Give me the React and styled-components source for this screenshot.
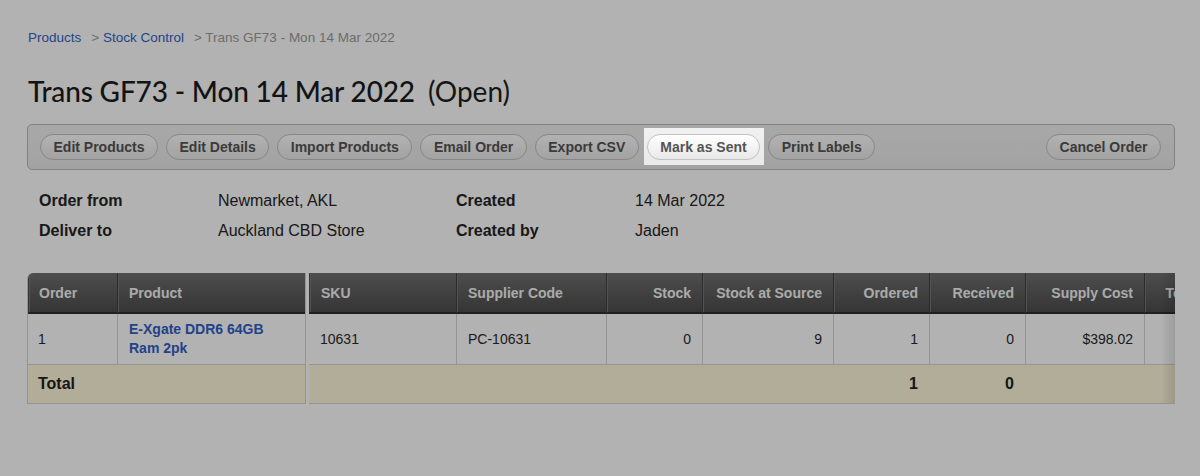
import React from 'react';
import styled, { createGlobalStyle } from 'styled-components';

const GlobalStyle = createGlobalStyle`
  html, body {
    margin: 0;
    padding: 0;
    height: 100%;
    background: #ffffff;
  }
  body {
    font-family: "Liberation Sans", Arial, sans-serif;
    color: #262626;
  }
  * {
    box-sizing: border-box;
  }
`;

const Page = styled.div`
  min-height: 100vh;
  padding: 29px 25px 0 27px;
`;

const Crumbs = styled.div`
  display: flex;
  align-items: center;
  gap: 10px;
  font-size: 13.5px;
  line-height: 18px;
  padding-left: 1px;
  color: #9c9c9c;
`;

const Crumb = styled.a`
  color: #3363c4;
  text-decoration: none;
  white-space: pre;
`;

const Title = styled.h1`
  margin: 27px 0 0 1px;
  font-family: Lato, "Liberation Sans", sans-serif;
  font-size: 28px;
  line-height: 34px;
  font-weight: 500;
  color: #1c1c1c;
  letter-spacing: -0.15px;
`;

const Status = styled.span`
  margin-left: 13px;
  font-size: 28px;
  font-weight: 400;
  color: #1f1f1f;
  letter-spacing: 0;
`;

const Toolbar = styled.div`
  margin-top: 16px;
  display: flex;
  align-items: center;
  gap: 8px;
  height: 46px;
  padding: 0 13px 0 12px;
  border: 1px solid #b9b9b9;
  border-radius: 5px;
  background: linear-gradient(#f1f1f1, #e9e9e9);
`;

const Button = styled.button`
  height: 26px;
  padding: 0 12.5px;
  border: 1px solid #c2c2c2;
  border-radius: 13px;
  background: linear-gradient(#ffffff, #e9e9e9);
  font-family: "Liberation Sans", Arial, sans-serif;
  font-size: 14px;
  font-weight: bold;
  color: #555555;
  white-space: nowrap;
  cursor: pointer;
  margin-left: ${p => (p.$push ? 'auto' : '0')};
`;

const Spotlight = styled.span`
  position: relative;
  z-index: 10;
  display: inline-flex;
  padding: 6px 4px 5px 3px;
  margin: -6px -4px -5px -3px;
  box-shadow: 0 0 0 3000px rgba(0, 0, 0, 0.3);
`;

const Details = styled.div`
  margin-top: 16px;
  padding-left: 12px;
  display: grid;
  grid-template-columns: 179px 238px 179px 1fr;
  grid-auto-rows: 30px;
  align-items: center;
  font-size: 16px;
`;

const Label = styled.div`
  font-weight: bold;
  color: #242424;
`;

const Value = styled.div`
  color: #262626;
`;

const Tables = styled.div`
  margin-top: 27px;
  display: flex;
  gap: 3px;
  align-items: flex-start;
`;

const Frozen = styled.table`
  width: 279px;
  flex: none;
  table-layout: fixed;
  border-collapse: separate;
  border-spacing: 0;
  border-left: 1px solid #d4d4d4;
  border-right: 1px solid #d4d4d4;
  border-bottom: 1px solid #d4d4d4;
  border-top-left-radius: 6px;
  overflow: hidden;
`;

const ScrollArea = styled.div`
  position: relative;
  flex: 1;
  overflow: hidden;
  border-bottom: 1px solid #d4d4d4;
`;

const EdgeShade = styled.div`
  position: absolute;
  top: 0;
  right: 0;
  bottom: 0;
  width: 14px;
  z-index: 1;
  background: linear-gradient(to right, rgba(0, 0, 0, 0), rgba(0, 0, 0, 0.12));
  pointer-events: none;
`;

const Grid = styled.table`
  width: 935px;
  table-layout: fixed;
  border-collapse: separate;
  border-spacing: 0;
`;

const Th = styled.th`
  height: 41px;
  padding: 0 11px 0 ${p => (p.$tight ? '10px' : '11px')};
  text-align: ${p => (p.$num ? 'right' : 'left')};
  font-size: 14px;
  font-weight: bold;
  color: #f4f4f4;
  background: linear-gradient(#6f6f6f, #4d4d4d);
  border-bottom: 2px solid #2e2e2e;
  border-left: 1px solid ${p => (p.$first ? '#4a4a4a' : '#3f3f3f')};
  box-shadow: inset 1px 0 0 #777777;
  white-space: nowrap;
  overflow: hidden;
`;

const Td = styled.td`
  height: 51px;
  padding: 0 11px 0 ${p => (p.$tight ? '10px' : '11px')};
  text-align: ${p => (p.$num ? 'right' : 'left')};
  font-size: 14px;
  color: #2a2a2a;
  background: #ffffff;
  border-left: ${p => (p.$first ? '0' : '1px solid #d6d6d6')};
  border-bottom: 1px solid #d6d6d6;
  white-space: nowrap;
`;

const ProductLink = styled.a`
  display: block;
  white-space: normal;
  font-weight: bold;
  line-height: 19px;
  color: #3160c4;
  text-decoration: none;
`;

const TotalCell = styled.td`
  height: 38px;
  padding: 0 11px;
  text-align: right;
  font-size: 16px;
  font-weight: bold;
  color: #222222;
  background: #fff8dc;
`;

const TotalLabel = styled(TotalCell)`
  padding-left: 10px;
  text-align: left;
`;

const columns = [
  { key: 'sku', title: 'SKU', width: 147 },
  { key: 'supplier', title: 'Supplier Code', width: 150 },
  { key: 'stock', title: 'Stock', width: 96, num: true },
  { key: 'source', title: 'Stock at Source', width: 131, num: true },
  { key: 'ordered', title: 'Ordered', width: 96, num: true },
  { key: 'received', title: 'Received', width: 96, num: true },
  { key: 'cost', title: 'Supply Cost', width: 119, num: true },
  { key: 'total', title: 'Total Cost', width: 100, num: true },
];

const line = {
  sku: '10631',
  supplier: 'PC-10631',
  stock: '0',
  source: '9',
  ordered: '1',
  received: '0',
  cost: '$398.02',
  total: '',
};

const totals = { ordered: '1', received: '0' };

const actions = [
  'Edit Products',
  'Edit Details',
  'Import Products',
  'Email Order',
  'Export CSV',
  'Mark as Sent',
  'Print Labels',
];

export default function App() {
  return (
    <Page>
      <GlobalStyle />
      <Crumbs>
        <Crumb href="#">Products</Crumb>
        <span>
          &gt; <Crumb href="#">Stock Control</Crumb>
        </span>
        <span>&gt; Trans GF73 - Mon 14 Mar 2022</span>
      </Crumbs>

      <Title>
        Trans GF73 - Mon 14 Mar 2022<Status>(Open)</Status>
      </Title>

      <Toolbar>
        {actions.map(a =>
          a === 'Mark as Sent' ? (
            <Spotlight key={a}>
              <Button>{a}</Button>
            </Spotlight>
          ) : (
            <Button key={a}>{a}</Button>
          )
        )}
        <Button $push>Cancel Order</Button>
      </Toolbar>

      <Details>
        <Label>Order from</Label>
        <Value>Newmarket, AKL</Value>
        <Label>Created</Label>
        <Value>14 Mar 2022</Value>
        <Label>Deliver to</Label>
        <Value>Auckland CBD Store</Value>
        <Label>Created by</Label>
        <Value>Jaden</Value>
      </Details>

      <Tables>
        <Frozen>
          <colgroup>
            <col style={{ width: 89 }} />
            <col />
          </colgroup>
          <thead>
            <tr>
              <Th $first $tight>Order</Th>
              <Th>Product</Th>
            </tr>
          </thead>
          <tbody>
            <tr>
              <Td $first $tight>1</Td>
              <Td>
                <ProductLink href="#">E-Xgate DDR6 64GB Ram 2pk</ProductLink>
              </Td>
            </tr>
            <tr>
              <TotalLabel colSpan={2}>Total</TotalLabel>
            </tr>
          </tbody>
        </Frozen>

        <ScrollArea>
          <EdgeShade />
          <Grid>
            <colgroup>
              {columns.map(c => (
                <col key={c.key} style={{ width: c.width }} />
              ))}
            </colgroup>
            <thead>
              <tr>
                {columns.map((c, i) => (
                  <Th key={c.key} $num={c.num} $first={i === 0}>
                    {c.title}
                  </Th>
                ))}
              </tr>
            </thead>
            <tbody>
              <tr>
                {columns.map((c, i) => (
                  <Td key={c.key} $num={c.num} $first={i === 0}>
                    {line[c.key]}
                  </Td>
                ))}
              </tr>
              <tr>
                {columns.map(c => (
                  <TotalCell key={c.key}>{totals[c.key] || ''}</TotalCell>
                ))}
              </tr>
            </tbody>
          </Grid>
        </ScrollArea>
      </Tables>
    </Page>
  );
}
